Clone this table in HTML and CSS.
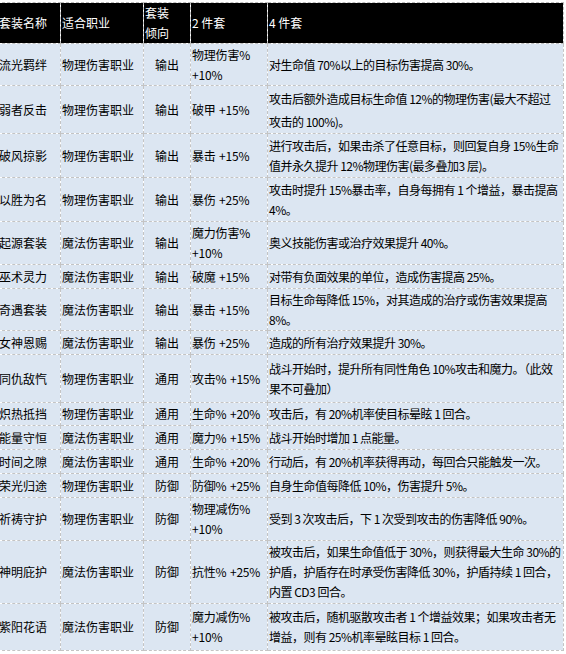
FILE: index.html
```html
<!DOCTYPE html>
<html lang="zh-CN">
<head>
<meta charset="utf-8">
<title>套装</title>
<link rel="stylesheet" href="styles.css">
</head>
<body>
<table class="sets">
  <colgroup>
    <col class="c-name">
    <col class="c-job">
    <col class="c-type">
    <col class="c-two">
    <col class="c-four">
  </colgroup>
  <thead>
    <tr class="h41">
      <th>套装名称</th>
      <th>适合职业</th>
      <th>套装<br>倾向</th>
      <th>2 件套</th>
      <th>4 件套</th>
    </tr>
  </thead>
  <tbody>
    <tr class="h42"><td>流光羁绊</td><td>物理伤害职业</td><td class="ty">输出</td><td class="two">物理伤害%<br>+10%</td><td class="four">对生命值 70%以上的目标伤害提高 30%。</td></tr>
    <tr class="h48"><td>弱者反击</td><td>物理伤害职业</td><td class="ty">输出</td><td class="two">破甲 +15%</td><td class="four wide">攻击后额外造成目标生命值 12%的物理伤害(最大不超过<br>攻击的 100%)。</td></tr>
    <tr class="h44"><td>破风掠影</td><td>物理伤害职业</td><td class="ty">输出</td><td class="two">暴击 +15%</td><td class="four">进行攻击后，如果击杀了任意目标，则回复自身 15%生命<br>值并永久提升 12%物理伤害(最多叠加3 层)。</td></tr>
    <tr class="h44"><td>以胜为名</td><td>物理伤害职业</td><td class="ty">输出</td><td class="two">暴伤 +25%</td><td class="four">攻击时提升 15%暴击率，自身每拥有 1 个增益，暴击提高<br>4%。</td></tr>
    <tr class="h43"><td>起源套装</td><td>魔法伤害职业</td><td class="ty">输出</td><td class="two">魔力伤害%<br>+10%</td><td class="four">奥义技能伤害或治疗效果提升 40%。</td></tr>
    <tr class="h24"><td>巫术灵力</td><td>魔法伤害职业</td><td class="ty">输出</td><td class="two">破魔 +15%</td><td class="four">对带有负面效果的单位，造成伤害提高 25%。</td></tr>
    <tr class="h42"><td>奇遇套装</td><td>魔法伤害职业</td><td class="ty">输出</td><td class="two">暴击 +15%</td><td class="four">目标生命每降低 15%，对其造成的治疗或伤害效果提高<br>8%。</td></tr>
    <tr class="h24"><td>女神恩赐</td><td>魔法伤害职业</td><td class="ty">输出</td><td class="two">暴伤 +25%</td><td class="four">造成的所有治疗效果提升 30%。</td></tr>
    <tr class="h48"><td>同仇敌忾</td><td>物理伤害职业</td><td class="ty">通用</td><td class="two">攻击% +15%</td><td class="four">战斗开始时，提升所有同性角色 10%攻击和魔力。（此效<br>果不可叠加）</td></tr>
    <tr class="h23"><td>炽热抵挡</td><td>物理伤害职业</td><td class="ty">通用</td><td class="two">生命% +20%</td><td class="four">攻击后，有 20%机率使目标晕眩 1 回合。</td></tr>
    <tr class="h24"><td>能量守恒</td><td>魔法伤害职业</td><td class="ty">通用</td><td class="two">魔力% +15%</td><td class="four">战斗开始时增加 1 点能量。</td></tr>
    <tr class="h24"><td>时间之隙</td><td>魔法伤害职业</td><td class="ty">通用</td><td class="two">生命% +20%</td><td class="four">行动后，有 20%机率获得再动，每回合只能触发一次。</td></tr>
    <tr class="h24"><td>荣光归途</td><td>物理伤害职业</td><td class="ty">防御</td><td class="two">防御% +25%</td><td class="four">自身生命值每降低 10%，伤害提升 5%。</td></tr>
    <tr class="h43"><td>祈祷守护</td><td>物理伤害职业</td><td class="ty">防御</td><td class="two">物理减伤%<br>+10%</td><td class="four">受到 3 次攻击后，下 1 次受到攻击的伤害降低 90%。</td></tr>
    <tr class="h63"><td>神明庇护</td><td>魔法伤害职业</td><td class="ty">防御</td><td class="two">抗性% +25%</td><td class="four">被攻击后，如果生命值低于 30%，则获得最大生命 30%的<br>护盾，护盾存在时承受伤害降低 30%，护盾持续 1 回合，<br>内置 CD3 回合。</td></tr>
    <tr class="h47"><td>紫阳花语</td><td>魔法伤害职业</td><td class="ty">防御</td><td class="two">魔力减伤%<br>+10%</td><td class="four">被攻击后，随机驱散攻击者 1 个增益效果；如果攻击者无<br>增益，则有 25%机率晕眩目标 1 回合。</td></tr>
  </tbody>
</table>
</body>
</html>
```

FILE: styles.css
```css
html, body {
  margin: 0;
  padding: 0;
  background: #ffffff;
}

.sets {
  border-collapse: collapse;
  table-layout: fixed;
  width: 566px;
  margin: 2px 0 0 -3px;
  font-family: "Noto Sans CJK SC", "Noto Sans", sans-serif;
  font-size: 12px;
  line-height: 20px;
  color: #000000;
}

.c-name { width: 63px; }
.c-job { width: 83px; }
.c-type { width: 47px; }
.c-two { width: 77px; }
.c-four { width: 296px; }

.sets th,
.sets td {
  border: 1px dashed #c4c4c4;
  padding: 0 0 0 1px;
  vertical-align: middle;
  text-align: left;
  overflow: hidden;
}

.sets th {
  background: #000000;
  color: #ffffff;
  font-weight: normal;
  border-color: #bdbdbd;
}

.sets td {
  background: #dce6f2;
}

.sets td.ty {
  text-align: center;
  padding: 0;
}

.sets td.two {
  word-spacing: 1px;
  letter-spacing: -0.2px;
  white-space: nowrap;
}

.sets td.four {
  white-space: nowrap;
  letter-spacing: -0.5px;
}

.sets td.wide {
  line-height: 23px;
}

.h23 { height: 23px; }
.h24 { height: 24px; }
.h41 { height: 41px; }
.h42 { height: 42px; }
.h43 { height: 43px; }
.h44 { height: 44px; }
.h47 { height: 47px; }
.h48 { height: 48px; }
.h63 { height: 63px; }
```
